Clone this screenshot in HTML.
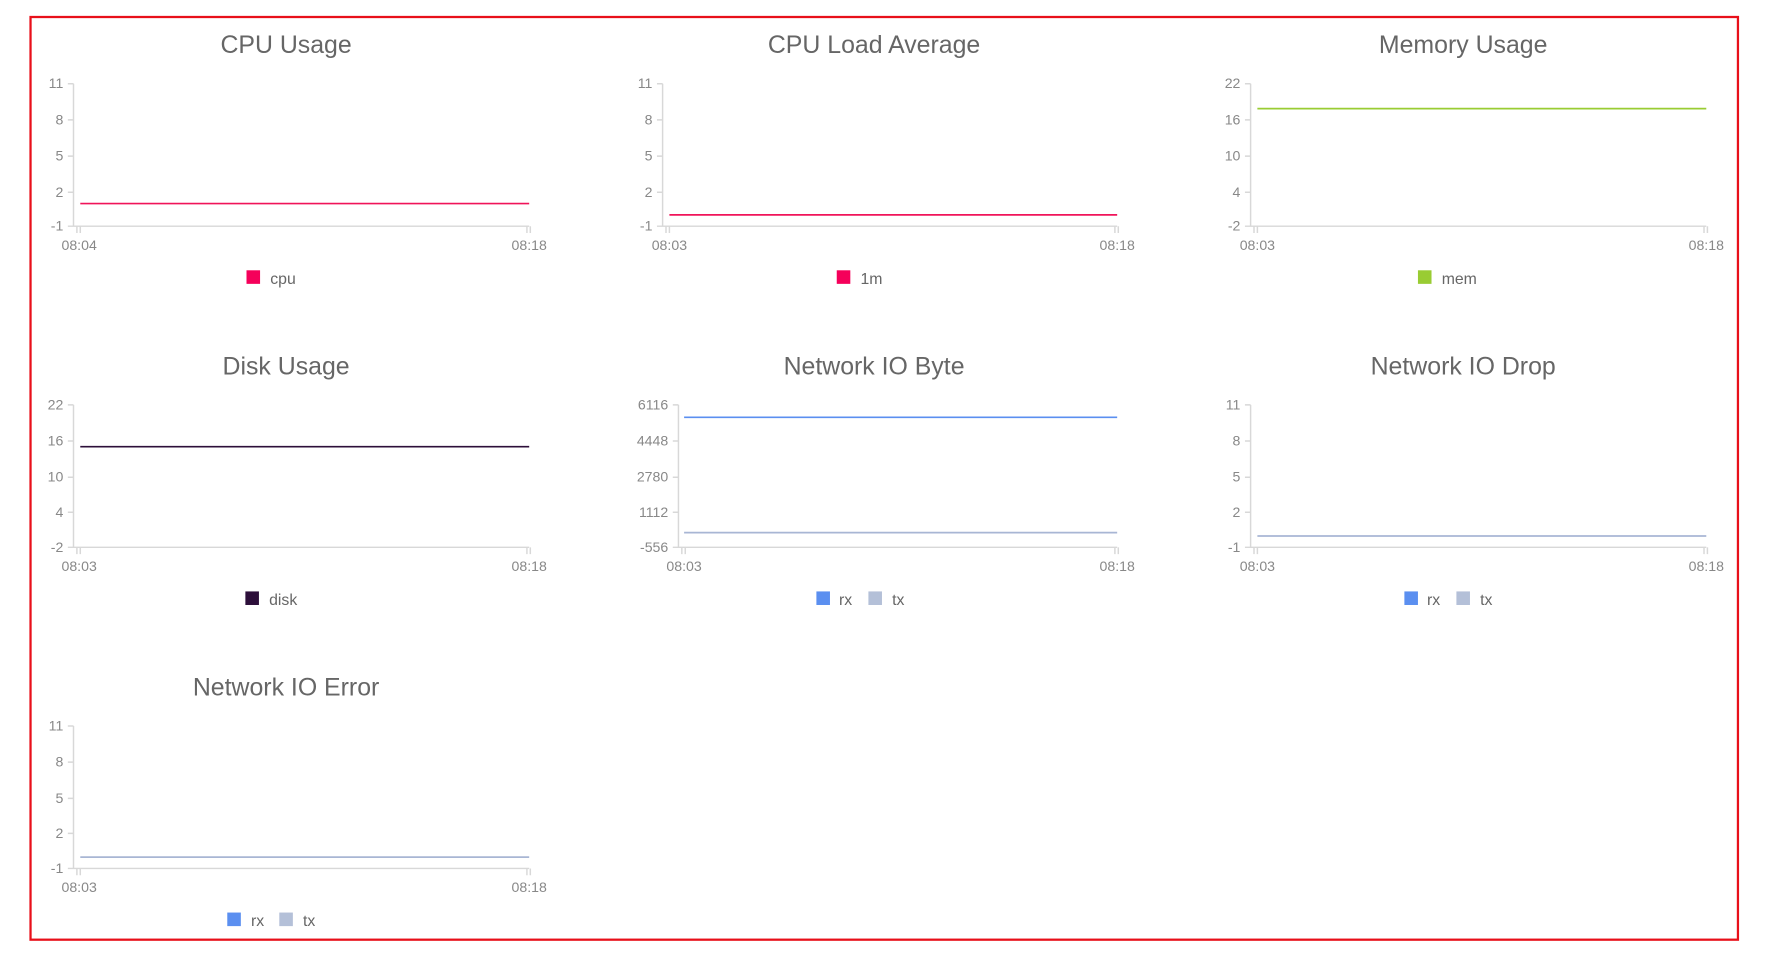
<!DOCTYPE html>
<html><head><meta charset="utf-8"><style>
html,body{margin:0;padding:0;background:#fff;overflow:hidden}
svg{display:block}
text{font-family:"Liberation Sans",sans-serif}
.t{font-size:22px;fill:#666;text-anchor:middle;font-weight:300}
.y{font-size:12.5px;fill:#888;text-anchor:end}
.x{font-size:12.5px;fill:#888;text-anchor:middle}
.l{font-size:14px;fill:#666}
.ax{stroke:#d8d8d8;stroke-width:1.3;fill:none}
</style></head><body>
<svg width="1773" height="968" viewBox="0 0 1568 856" xmlns="http://www.w3.org/2000/svg">
<rect x="0" y="0" width="1568" height="856" fill="#fff"/>
<rect x="27" y="15" width="1510" height="816" fill="none" stroke="#e8101a" stroke-width="2"/>

<text class="t" x="253" y="47">CPU Usage</text>
<text class="t" x="773" y="47">CPU Load Average</text>
<text class="t" x="1294" y="47">Memory Usage</text>
<text class="t" x="253" y="331">Disk Usage</text>
<text class="t" x="773" y="331">Network IO Byte</text>
<text class="t" x="1294" y="331">Network IO Drop</text>
<text class="t" x="253" y="615">Network IO Error</text>

<path class="ax" d="M65 74V200H468M60 74H65M60 106H65M60 138H65M60 170H65M60 200H65M68 200V206M71 200V206M466 200V206M469 200V206"/>
<text class="y" x="56" y="78">11</text><text class="y" x="56" y="110">8</text><text class="y" x="56" y="142">5</text><text class="y" x="56" y="174">2</text><text class="y" x="56" y="204">-1</text>
<text class="x" x="70" y="221">08:04</text><text class="x" x="468" y="221">08:18</text>
<line x1="71" y1="180" x2="468" y2="180" stroke="#f0145a" stroke-width="1.5"/>
<rect x="218" y="239" width="12" height="12" fill="#f5005a"/><text class="l" x="239" y="251">cpu</text>

<path class="ax" d="M586 74V200H988M581 74H586M581 106H586M581 138H586M581 170H586M581 200H586M589 200V206M592 200V206M986 200V206M989 200V206"/>
<text class="y" x="577" y="78">11</text><text class="y" x="577" y="110">8</text><text class="y" x="577" y="142">5</text><text class="y" x="577" y="174">2</text><text class="y" x="577" y="204">-1</text>
<text class="x" x="592" y="221">08:03</text><text class="x" x="988" y="221">08:18</text>
<line x1="592" y1="190" x2="988" y2="190" stroke="#f0145a" stroke-width="1.5"/>
<rect x="740" y="239" width="12" height="12" fill="#f5005a"/><text class="l" x="761" y="251">1m</text>

<path class="ax" d="M1106 74V200H1509M1101 74H1106M1101 106H1106M1101 138H1106M1101 170H1106M1101 200H1106M1109 200V206M1112 200V206M1507 200V206M1510 200V206"/>
<text class="y" x="1097" y="78">22</text><text class="y" x="1097" y="110">16</text><text class="y" x="1097" y="142">10</text><text class="y" x="1097" y="174">4</text><text class="y" x="1097" y="204">-2</text>
<text class="x" x="1112" y="221">08:03</text><text class="x" x="1509" y="221">08:18</text>
<line x1="1112" y1="96" x2="1509" y2="96" stroke="#99cc33" stroke-width="1.5"/>
<rect x="1254" y="239" width="12" height="12" fill="#99cc33"/><text class="l" x="1275" y="251">mem</text>

<path class="ax" d="M65 358V484H468M60 358H65M60 390H65M60 422H65M60 453H65M60 484H65M68 484V490M71 484V490M466 484V490M469 484V490"/>
<text class="y" x="56" y="362">22</text><text class="y" x="56" y="394">16</text><text class="y" x="56" y="426">10</text><text class="y" x="56" y="457">4</text><text class="y" x="56" y="488">-2</text>
<text class="x" x="70" y="505">08:03</text><text class="x" x="468" y="505">08:18</text>
<line x1="71" y1="395" x2="468" y2="395" stroke="#2d0f3a" stroke-width="1.5"/>
<rect x="217" y="523" width="12" height="12" fill="#2d0f3a"/><text class="l" x="238" y="535">disk</text>

<path class="ax" d="M600 358V484H988M595 358H600M595 390H600M595 422H600M595 453H600M595 484H600M603 484V490M606 484V490M986 484V490M989 484V490"/>
<text class="y" x="591" y="362">6116</text><text class="y" x="591" y="394">4448</text><text class="y" x="591" y="426">2780</text><text class="y" x="591" y="457">1112</text><text class="y" x="591" y="488">-556</text>
<text class="x" x="605" y="505">08:03</text><text class="x" x="988" y="505">08:18</text>
<line x1="605" y1="369" x2="988" y2="369" stroke="#5b8ff0" stroke-width="1.5"/>
<line x1="605" y1="471" x2="988" y2="471" stroke="#a8b6d4" stroke-width="1.5"/>
<rect x="722" y="523" width="12" height="12" fill="#5b8ff0"/><text class="l" x="742" y="535">rx</text>
<rect x="768" y="523" width="12" height="12" fill="#b4c0d8"/><text class="l" x="789" y="535">tx</text>

<path class="ax" d="M1106 358V484H1509M1101 358H1106M1101 390H1106M1101 422H1106M1101 453H1106M1101 484H1106M1109 484V490M1112 484V490M1507 484V490M1510 484V490"/>
<text class="y" x="1097" y="362">11</text><text class="y" x="1097" y="394">8</text><text class="y" x="1097" y="426">5</text><text class="y" x="1097" y="457">2</text><text class="y" x="1097" y="488">-1</text>
<text class="x" x="1112" y="505">08:03</text><text class="x" x="1509" y="505">08:18</text>
<line x1="1112" y1="474" x2="1509" y2="474" stroke="#a8b6d4" stroke-width="1.5"/>
<rect x="1242" y="523" width="12" height="12" fill="#5b8ff0"/><text class="l" x="1262" y="535">rx</text>
<rect x="1288" y="523" width="12" height="12" fill="#b4c0d8"/><text class="l" x="1309" y="535">tx</text>

<path class="ax" d="M65 642V768H468M60 642H65M60 674H65M60 706H65M60 737H65M60 768H65M68 768V774M71 768V774M466 768V774M469 768V774"/>
<text class="y" x="56" y="646">11</text><text class="y" x="56" y="678">8</text><text class="y" x="56" y="710">5</text><text class="y" x="56" y="741">2</text><text class="y" x="56" y="772">-1</text>
<text class="x" x="70" y="789">08:03</text><text class="x" x="468" y="789">08:18</text>
<line x1="71" y1="758" x2="468" y2="758" stroke="#a8b6d4" stroke-width="1.5"/>
<rect x="201" y="807" width="12" height="12" fill="#5b8ff0"/><text class="l" x="222" y="819">rx</text>
<rect x="247" y="807" width="12" height="12" fill="#b4c0d8"/><text class="l" x="268" y="819">tx</text>
</svg>
</body></html>
